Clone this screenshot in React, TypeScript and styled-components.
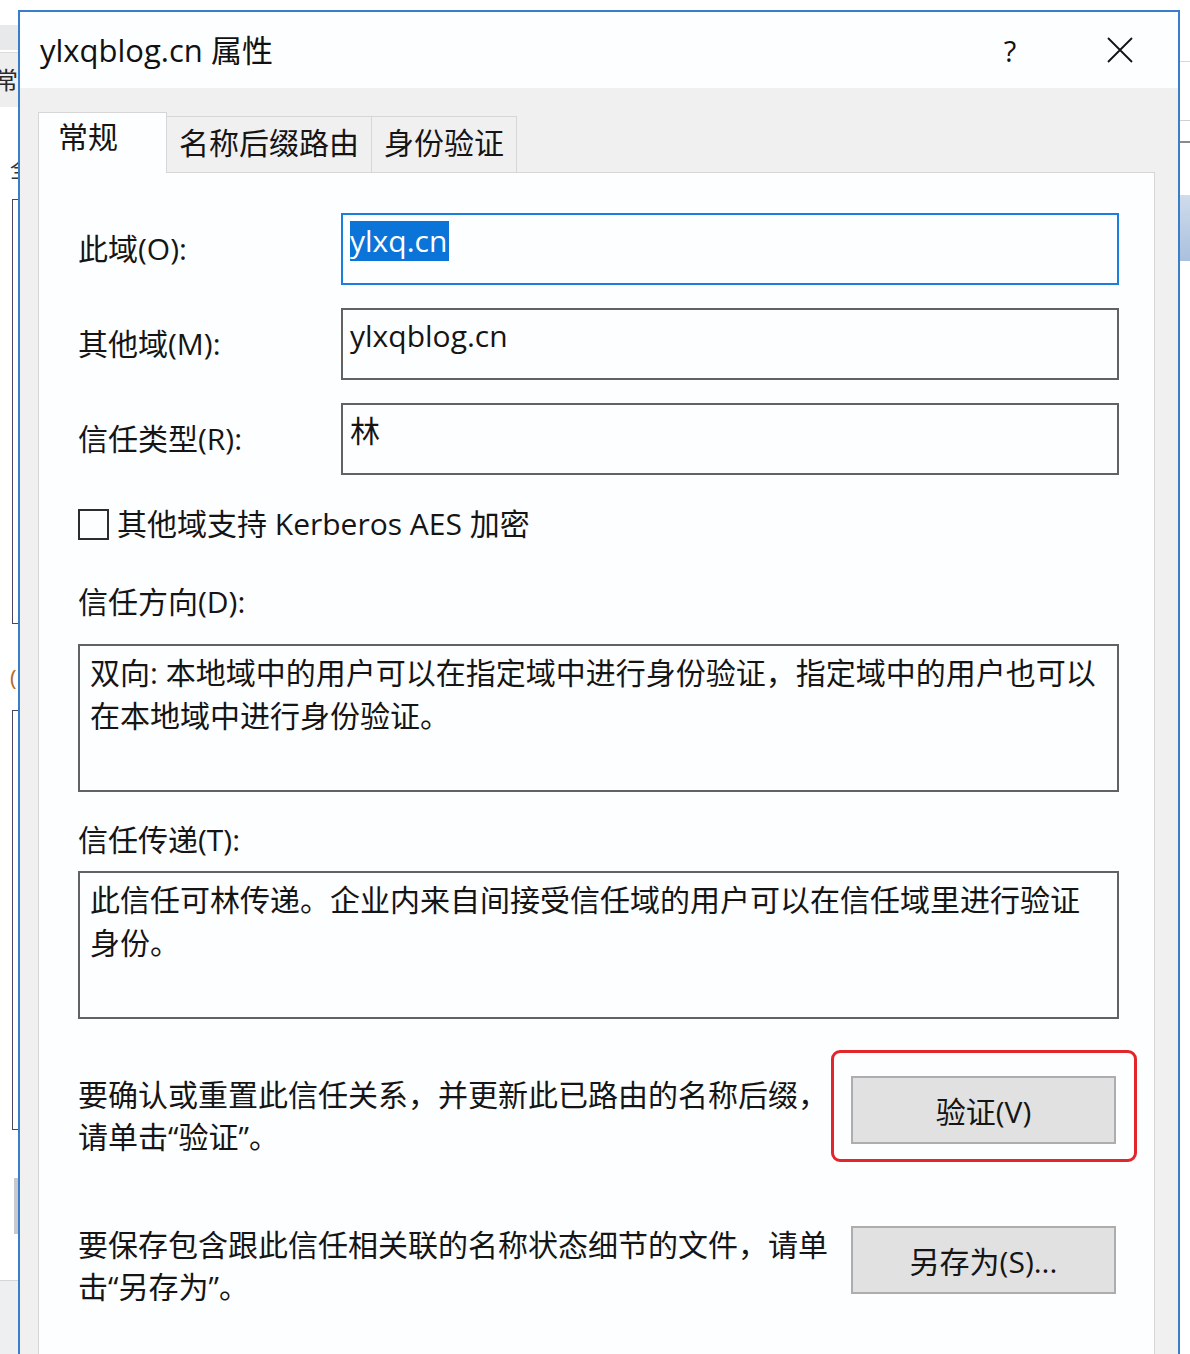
import React from "react";
import styled, { createGlobalStyle } from "styled-components";

const GlobalStyle = createGlobalStyle`
  html, body {
    margin: 0;
    padding: 0;
    background: #ffffff;
  }
  body {
    font-family: "Open Sans", "Noto Sans CJK SC", "Noto Sans", sans-serif;
    color: #141414;
  }
  * {
    box-sizing: border-box;
  }
`;

const Screen = styled.div`
  display: flex;
  width: 1190px;
  height: 1354px;
  overflow: hidden;
  background: #ffffff;
`;

/* bits of the window behind the dialog */
const BackLeft = styled.aside`
  flex: 0 0 18px;
  display: flex;
  flex-direction: column;
  overflow: hidden;
`;

const BackRight = styled.aside`
  flex: 0 0 10px;
  display: flex;
  flex-direction: column;
  overflow: hidden;
`;

const BackBlock = styled.div<{ $top: number; $height: number; $bg: string }>`
  margin-top: ${({ $top }) => $top}px;
  height: ${({ $height }) => $height}px;
  background: ${({ $bg }) => $bg};
  flex-shrink: 0;
`;

const BackTab = styled.div`
  margin-top: 2px;
  height: 55px;
  background: #eeeeee;
  border-top: 1px solid #dcdcdc;
  display: flex;
  align-items: center;
  font-size: 24px;
  line-height: 28px;
  color: #2a2a2a;
  span {
    margin-left: -6px;
  }
`;

const BackGlyph = styled.div<{ $top: number; $color?: string }>`
  margin-top: ${({ $top }) => $top}px;
  height: 26px;
  padding-left: 10px;
  font-size: 22px;
  line-height: 26px;
  color: ${({ $color }) => $color || "#333"};
  white-space: nowrap;
  flex-shrink: 0;
`;

const BackFrame = styled.div<{ $top: number; $height: number }>`
  margin-top: ${({ $top }) => $top}px;
  margin-left: 12px;
  height: ${({ $height }) => $height}px;
  border: 1.5px solid #4a4560;
  border-right: none;
  flex-shrink: 0;
`;

const BackBar = styled.div<{ $top: number; $height: number }>`
  margin-top: ${({ $top }) => $top}px;
  margin-left: 14px;
  height: ${({ $height }) => $height}px;
  background: #c6c9ce;
  flex-shrink: 0;
`;

const BackFooter = styled.div`
  margin-top: 46px;
  flex: 1;
  background: #eeeff1;
  border-top: 1px solid #d6d6d6;
`;

const BackLine = styled.div<{ $top: number; $color: string; $size?: number }>`
  margin-top: ${({ $top }) => $top}px;
  height: ${({ $size }) => $size || 1}px;
  background: ${({ $color }) => $color};
  flex-shrink: 0;
`;

const BackScroll = styled.div`
  margin-top: 52px;
  height: 66px;
  background: linear-gradient(180deg, #cfdcec, #a9c0dd);
  flex-shrink: 0;
`;

/* dialog */
const Dialog = styled.section`
  flex: 0 0 1162px;
  margin-top: 10px;
  display: flex;
  flex-direction: column;
  border: 2px solid #3a7dc8;
  border-bottom: none;
  background: #f0f0f1;
`;

const TitleBar = styled.header`
  height: 76px;
  flex-shrink: 0;
  display: flex;
  align-items: center;
  padding: 0 28px 0 20px;
  background: #fdfeff;
`;

const Title = styled.h1`
  flex: 1;
  margin: 0;
  font-size: 31px;
  font-weight: 400;
  line-height: 40px;
  color: #111;
`;

const CaptionButton = styled.span`
  width: 60px;
  height: 48px;
  display: flex;
  align-items: center;
  justify-content: center;
  font-size: 29px;
  color: #111;
  & + & {
    margin-left: 50px;
  }
`;

const Body = styled.div`
  flex: 1;
  display: flex;
  flex-direction: column;
  padding: 24px 23px 0 18px;
`;

const TabRow = styled.nav`
  height: 60px;
  flex-shrink: 0;
  display: flex;
  align-items: flex-end;
`;

const Tab = styled.div<{ $active?: boolean }>`
  position: relative;
  z-index: ${({ $active }) => ($active ? 1 : 0)};
  height: ${({ $active }) => ($active ? 61 : 56)}px;
  margin-bottom: ${({ $active }) => ($active ? -1 : 0)}px;
  padding: ${({ $active }) => ($active ? "3px 48px 0 19px" : "5px 12px 0 12px")};
  background: ${({ $active }) => ($active ? "#fdfeff" : "#f0f0f1")};
  border: 1px solid #d6d6d6;
  border-bottom: none;
  border-left: ${({ $active }) => ($active ? "1px solid #d6d6d6" : "none")};
  font-size: 30px;
  line-height: 42px;
  color: #151515;
  white-space: nowrap;
`;

const Panel = styled.div`
  flex: 1;
  display: flex;
  flex-direction: column;
  padding: 40px 35px 0 39px;
  background: #fdfeff;
  border: 1px solid #d6d6d6;
  border-bottom: none;
`;

const FieldGrid = styled.div`
  display: grid;
  grid-template-columns: 263px 1fr;
  grid-auto-rows: 72px;
  row-gap: 23px;
  align-items: center;
`;

const FieldLabel = styled.label`
  font-size: 30px;
  line-height: 42px;
  color: #151515;
`;

const TextBox = styled.div<{ $focused?: boolean }>`
  height: 100%;
  padding: 6px 7px 0;
  border: 2px solid ${({ $focused }) => ($focused ? "#1a7fdc" : "#626262")};
  background: #fdfeff;
  font-size: 30px;
  line-height: 40px;
  color: #151515;
`;

const Selected = styled.span`
  display: inline-block;
  background: #0a74d8;
  color: #ffffff;
  padding-right: 2px;
`;

const CheckRow = styled.div`
  margin-top: 28px;
  height: 42px;
  display: flex;
  align-items: center;
  gap: 8px;
  font-size: 30px;
  line-height: 42px;
  color: #151515;
`;

const CheckBox = styled.span`
  width: 31px;
  height: 31px;
  border: 2px solid #2d2d2d;
  background: #fdfeff;
`;

const SectionLabel = styled.div<{ $top: number }>`
  margin-top: ${({ $top }) => $top}px;
  font-size: 30px;
  line-height: 42px;
  color: #151515;
`;

const InfoBox = styled.div<{ $top: number }>`
  margin-top: ${({ $top }) => $top}px;
  height: 148px;
  flex-shrink: 0;
  padding: 5px 10px 0;
  border: 2px solid #626262;
  background: #fdfeff;
  font-size: 30px;
  line-height: 43px;
  color: #151515;
`;

const ActionRow = styled.div<{ $top: number }>`
  margin-top: ${({ $top }) => $top}px;
  display: flex;
  justify-content: space-between;
  align-items: flex-start;
`;

const ActionText = styled.p`
  margin: 0;
  font-size: 30px;
  line-height: 42px;
  color: #151515;
`;

const ActionButton = styled.button<{ $inFrame?: boolean }>`
  width: 265px;
  height: 68px;
  margin: ${({ $inFrame }) => ($inFrame ? "0" : "2px 3px 0 0")};
  background: #e1e1e1;
  border: 2px solid #adadad;
  font-family: inherit;
  font-size: 30px;
  color: #151515;
  padding: 0;
`;

const MarkFrame = styled.div`
  margin: -24px -18px -4px 0;
  padding: 23px 18px 15px 17px;
  border: 3px solid #e3262b;
  border-radius: 9px;
`;

function CloseIcon() {
  return (
    <svg width="26" height="26" viewBox="0 0 26 26">
      <path d="M1 1L25 25M25 1L1 25" stroke="#111" strokeWidth="1.8" fill="none" />
    </svg>
  );
}

export default function App() {
  return (
    <>
      <GlobalStyle />
      <Screen>
        <BackLeft>
          <BackBlock $top={25} $height={25} $bg="#e8e9eb" />
          <BackTab>
            <span>常</span>
          </BackTab>
          <BackGlyph $top={48}>全</BackGlyph>
          <BackFrame $top={18} $height={425} />
          <BackGlyph $top={40} $color="#b06a2a">(</BackGlyph>
          <BackFrame $top={20} $height={420} />
          <BackBar $top={48} $height={56} />
          <BackFooter />
        </BackLeft>

        <Dialog>
          <TitleBar>
            <Title>ylxqblog.cn 属性</Title>
            <CaptionButton>?</CaptionButton>
            <CaptionButton>
              <CloseIcon />
            </CaptionButton>
          </TitleBar>

          <Body>
            <TabRow>
              <Tab $active>常规</Tab>
              <Tab>名称后缀路由</Tab>
              <Tab>身份验证</Tab>
            </TabRow>

            <Panel>
              <FieldGrid>
                <FieldLabel>此域(O):</FieldLabel>
                <TextBox $focused>
                  <Selected>ylxq.cn</Selected>
                </TextBox>
                <FieldLabel>其他域(M):</FieldLabel>
                <TextBox>ylxqblog.cn</TextBox>
                <FieldLabel>信任类型(R):</FieldLabel>
                <TextBox>林</TextBox>
              </FieldGrid>

              <CheckRow>
                <CheckBox />
                <span>其他域支持 Kerberos AES 加密</span>
              </CheckRow>

              <SectionLabel $top={36}>信任方向(D):</SectionLabel>
              <InfoBox $top={21}>
                双向: 本地域中的用户可以在指定域中进行身份验证，指定域中的用户也可以
                <br />
                在本地域中进行身份验证。
              </InfoBox>

              <SectionLabel $top={27}>信任传递(T):</SectionLabel>
              <InfoBox $top={10}>
                此信任可林传递。企业内来自间接受信任域的用户可以在信任域里进行验证
                <br />
                身份。
              </InfoBox>

              <ActionRow $top={55}>
                <ActionText>
                  要确认或重置此信任关系，并更新此已路由的名称后缀，
                  <br />
                  请单击“验证”。
                </ActionText>
                <MarkFrame>
                  <ActionButton $inFrame>验证(V)</ActionButton>
                </MarkFrame>
              </ActionRow>

              <ActionRow $top={66}>
                <ActionText>
                  要保存包含跟此信任相关联的名称状态细节的文件，请单
                  <br />
                  击“另存为”。
                </ActionText>
                <ActionButton>另存为(S)...</ActionButton>
              </ActionRow>
            </Panel>
          </Body>
        </Dialog>

        <BackRight>
          <BackLine $top={61} $color="#d8d8d8" />
          <BackLine $top={58} $color="#cfcfcf" />
          <BackLine $top={20} $color="#8a8a8a" $size={2} />
          <BackScroll />
        </BackRight>
      </Screen>
    </>
  );
}
